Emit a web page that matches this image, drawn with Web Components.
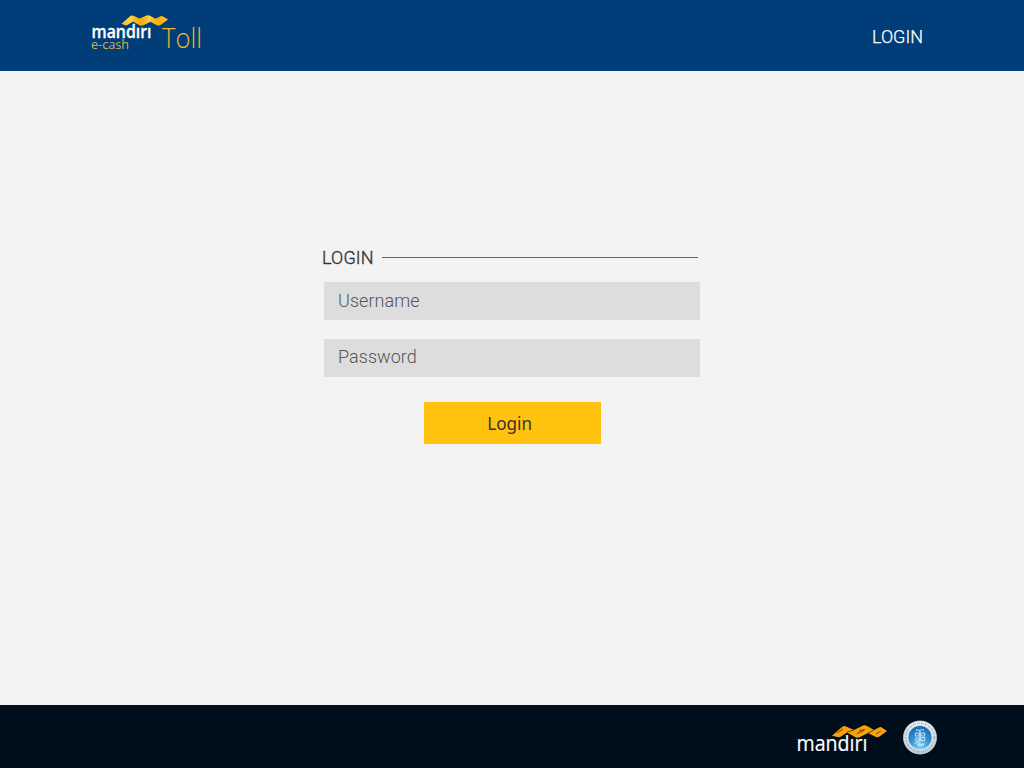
<!DOCTYPE html>
<html lang="en">
<head>
<meta charset="utf-8">
<title>mandiri e-cash Toll</title>
<style>
html,body{margin:0;height:100%}
body{font-family:Roboto,"Liberation Sans",sans-serif;background:#f3f3f3;overflow:hidden}
</style>
</head>
<body>
<toll-page>
  <toll-header slot="header">LOGIN</toll-header>
  <login-form>
    <span slot="title">LOGIN</span>
    <login-field type="text" label="Username"></login-field>
    <login-field type="password" label="Password"></login-field>
    <login-button slot="action">Login</login-button>
  </login-form>
  <toll-footer slot="footer"></toll-footer>
</toll-page>
<script>
function define(name, html) {
  const template = document.createElement('template');
  template.innerHTML = html;
  customElements.define(name, class extends HTMLElement {
    constructor() {
      super();
      this.attachShadow({mode: 'open'}).append(template.content.cloneNode(true));
    }
    connectedCallback() {
      const input = this.shadowRoot.querySelector('input');
      if (input) {
        input.type = this.getAttribute('type');
        input.placeholder = this.getAttribute('label');
        input.setAttribute('aria-label', this.getAttribute('label'));
      }
    }
  });
}

define('toll-page', `
<style>
:host{display:grid;grid-template-rows:71px 1fr 63px;height:100vh;background:#f3f3f3}
main{display:flex;justify-content:center;align-items:flex-start;padding-top:176px}
</style>
<slot name="header"></slot><main><slot></slot></main><slot name="footer"></slot>`);

define('ecash-logo', `
<style>:host{display:block}svg{display:block;overflow:visible}</style>
<svg width="124" height="46" viewBox="88 8 124 46" role="img" aria-label="mandiri e-cash Toll">
  <defs><linearGradient id="g" x1="0" x2="1"><stop offset="0" stop-color="#fdb913"/><stop offset=".2" stop-color="#ffd24a"/><stop offset=".42" stop-color="#f5a700"/><stop offset=".6" stop-color="#ffcf42"/><stop offset=".8" stop-color="#f7ad08"/><stop offset="1" stop-color="#ffc72e"/></linearGradient></defs>
  <path fill="url(#g)" d="M121.500 23.800L130 16.200Q131.500 15 133.500 15.700L139.500 18.500L146.500 15.500Q148.500 14.800 150.500 16L155.500 18.700L160.500 16.300Q162 15.700 163.500 16.700L168 19.500L160.500 25Q158.500 26 156.500 25L150.500 21.800L143.500 25.300Q141.500 26.300 139.500 25.200L133 21.500L127.500 25Q126 25.700 124.500 25Z"/>
  <path fill="none" stroke="#d78900" stroke-width=".6" opacity=".6" d="M133 21.500L139.500 18.500M150.500 21.800L155.500 18.700"/>
  <text x="91.500" y="37.900" fill="#fff" stroke="#fff" stroke-width=".3" font-family="Open Sans" font-weight="600" font-size="17.800" textLength="60" lengthAdjust="spacingAndGlyphs">mandırı</text>
  <text x="91" y="48.900" fill="#d1b34b" font-family="Open Sans" font-size="12" textLength="38" lengthAdjust="spacingAndGlyphs">e-cash</text>
  <text x="162" y="47.700" fill="#eeb52d" font-family="Open Sans" font-weight="300" font-size="27" textLength="40" lengthAdjust="spacingAndGlyphs">Toll</text>
</svg>`);

define('toll-header', `
<style>
:host{display:flex;justify-content:space-between;align-items:flex-start;box-sizing:border-box;padding:8px 101px 0 88px;background:#003d79;color:#fff}
a{font-size:18px;font-weight:300;line-height:22px;margin-top:18px;-webkit-text-stroke:.25px #fff}
</style>
<ecash-logo></ecash-logo><a><slot></slot></a>`);

define('login-form', `
<style>
:host{display:flex;flex-direction:column;width:376px}
header{display:flex;align-items:flex-start;gap:8px;height:22px;margin:0 2px 13px -2px;font-size:18px;font-weight:300;letter-spacing:.15px;line-height:22px;color:#333;-webkit-text-stroke:.35px #333}
header ::slotted(span){width:52px;white-space:nowrap}
header::after{content:"";flex:1;height:1px;margin-top:10px;background:#666}
section{display:flex;flex-direction:column;gap:19px}
footer{display:flex;justify-content:center;padding:25px 0 0 1px}
</style>
<header><slot name="title"></slot></header><section><slot></slot></section><footer><slot name="action"></slot></footer>`);

define('login-field', `
<style>
:host{display:block;height:38px}
input{display:block;box-sizing:border-box;width:100%;height:38px;margin:0;padding:0 14px 1px;border:0;border-radius:0;background:#ddd;font:300 18px Roboto,sans-serif;letter-spacing:.05px;color:#333;outline:0}
:host([type="password"]) input{padding-bottom:3px}
input::placeholder{color:#555;opacity:1}
</style><input>`);

define('login-button', `
<style>
:host{display:block}
button{display:block;width:177px;height:42px;padding:0 6px 1px 0;border:0;background:#ffc20e;color:#333;font:400 18px "Noto Sans",sans-serif}
span{display:inline-block;transform:scaleX(.95)}
</style><button><span><slot></slot></span></button>`);

define('mandiri-logo', `
<style>:host{display:block}svg{display:block;overflow:visible}</style>
<svg width="94" height="34" viewBox="795 722 94 34" role="img" aria-label="mandiri">
  <path fill="#f9a10b" d="M832 735.800L842 727Q844 725.500 846 726.500L854 730L863 725.500Q865 724.700 867 726L874 730L879.500 727.200Q881 726.800 882.500 728L887 731L879.500 736.500Q877.500 737.800 875.500 736.800L868 733L859.500 737.300Q857.500 738.300 855.500 737.200L847 732.500L841 736.500Q839 737.700 836.500 736.800Z"/>
  <path fill="none" stroke="#714800" stroke-width="1" d="M837 733l6-4M847 732l7-2M857 733.500l7-3M859 730.500l6-1M868 733l6-3M876 734l5-3"/>
  <text x="796.500" y="751" fill="#fff" stroke="#fff" stroke-width=".2" font-family="Open Sans" font-weight="400" font-size="21" textLength="71" lengthAdjust="spacingAndGlyphs">mandırı</text>
</svg>`);

define('seal-badge', `
<style>:host{display:block}svg{display:block}</style>
<svg width="36" height="36" viewBox="0 0 36 36" aria-hidden="true">
  <defs><radialGradient id="b" cx=".5" cy=".85" r=".8"><stop offset="0" stop-color="#8bd0f4"/><stop offset=".5" stop-color="#3794d2"/><stop offset="1" stop-color="#1d69ae"/></radialGradient><linearGradient id="r" x2="0" y2="1"><stop stop-color="#f4f7f9"/><stop offset="1" stop-color="#c8d4dc"/></linearGradient></defs>
  <circle cx="18" cy="18.500" r="16.800" fill="url(#r)"/><circle cx="18" cy="18.500" r="16.500" fill="none" stroke="#aebdc8" stroke-width=".6"/>
  <circle cx="18" cy="18.500" r="14.300" fill="none" stroke="#688aa3" stroke-width="1.900" stroke-dasharray="1.300 .9 .6 1.200" opacity=".6"/>
  <circle cx="18" cy="18.500" r="12" fill="url(#b)" stroke="#eef8ff" stroke-width=".6"/>
  <path fill="none" stroke="#d4efff" stroke-width="1.100" opacity=".8" d="M14 11.500c2-2 3 1 4 0s3-1 4 0M13.500 14h3.500v3h-3.500zM19 14h3.500v3h-3.500zM14 19h3v3h-3zM19 18.500h3.500v3h-3.500zM13 24.500q2-2 4 0t5 0M18 12v11M15 26h7"/>
</svg>`);

define('toll-footer', `
<style>:host{display:flex;box-sizing:border-box;justify-content:flex-end;align-items:flex-start;padding:14px 86px 0 0;background:#000e1b;gap:13px}mandiri-logo{margin-top:3px}</style>
<mandiri-logo></mandiri-logo><seal-badge></seal-badge>`);
</script>
</body>
</html>
